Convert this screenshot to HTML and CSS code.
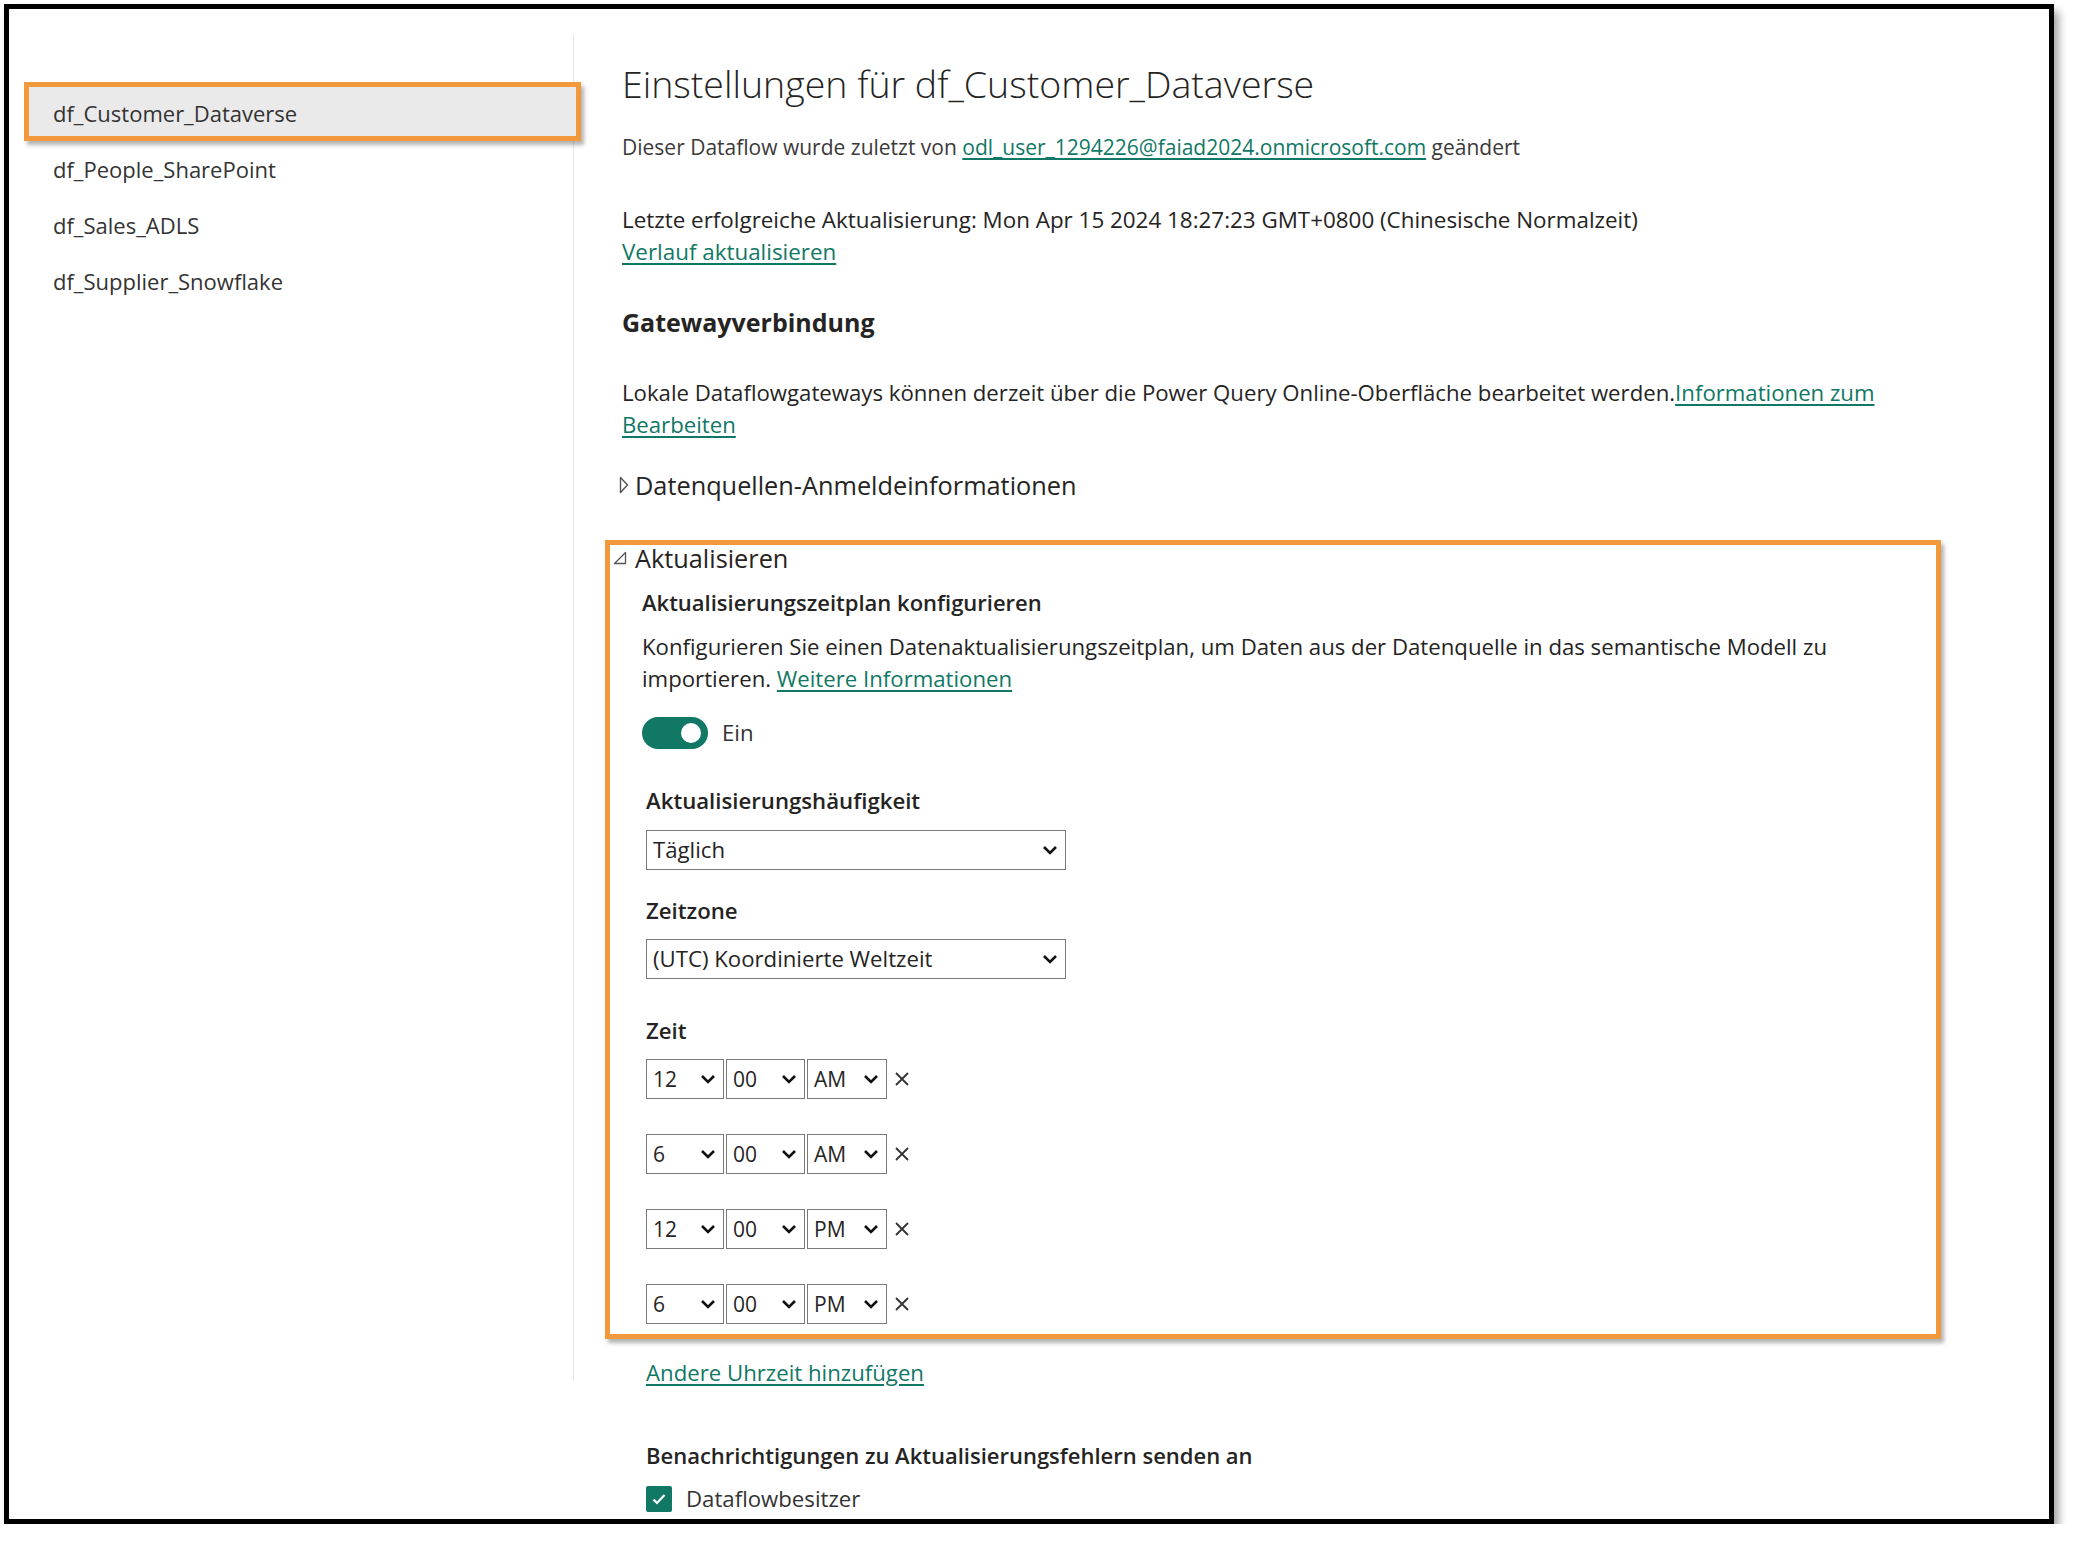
FILE: index.html
```html
<!DOCTYPE html>
<html lang="de">
<head>
<meta charset="utf-8">
<title>Einstellungen für df_Customer_Dataverse</title>
<link rel="stylesheet" href="styles.css">
</head>
<body>
<div class="frame">
  <nav class="sidebar">
    <ul class="df-list">
      <li class="df-item selected">df_Customer_Dataverse</li>
      <li class="df-item">df_People_SharePoint</li>
      <li class="df-item">df_Sales_ADLS</li>
      <li class="df-item">df_Supplier_Snowflake</li>
    </ul>
  </nav>
  <main class="main">
    <h1 class="title">Einstellungen für df_Customer_Dataverse</h1>
    <p class="modified">Dieser Dataflow wurde zuletzt von <a class="link">odl_user_1294226@faiad2024.onmicrosoft.com</a> geändert</p>
    <p class="last-refresh">Letzte erfolgreiche Aktualisierung: Mon Apr 15 2024 18:27:23 GMT+0800 (Chinesische Normalzeit)<br><a class="link">Verlauf aktualisieren</a></p>
    <h2 class="section-title">Gatewayverbindung</h2>
    <p class="gateway-text">Lokale Dataflowgateways können derzeit über die Power Query Online-Oberfläche bearbeitet werden.<a class="link">Informationen zum<br>Bearbeiten</a></p>
    <div class="expander collapsed">
      <svg class="tri-right" width="10" height="18" viewBox="0 0 10 18"><path d="M1.5 1.5 L8.5 9 L1.5 16.5 Z" fill="none" stroke="#555" stroke-width="1.4" stroke-linejoin="round"/></svg>
      <span>Datenquellen-Anmeldeinformationen</span>
    </div>
    <section class="highlight">
      <div class="expander open">
        <svg class="tri-down" width="14" height="14" viewBox="0 0 14 14"><path d="M12.5 1.5 L12.5 12.5 L1.5 12.5 Z" fill="none" stroke="#555" stroke-width="1.3" stroke-linejoin="round"/></svg>
        <span>Aktualisieren</span>
      </div>
      <div class="refresh-body">
        <h3 class="sub-title">Aktualisierungszeitplan konfigurieren</h3>
        <p class="desc">Konfigurieren Sie einen Datenaktualisierungszeitplan, um Daten aus der Datenquelle in das semantische Modell zu<br>importieren. <a class="link">Weitere Informationen</a></p>
        <div class="toggle-row">
          <span class="toggle"><span class="knob"></span></span>
          <span class="toggle-label">Ein</span>
        </div>
        <div class="field freq">
          <label class="field-label">Aktualisierungshäufigkeit</label>
          <div class="select wide"><span>Täglich</span><svg class="chev" width="16" height="10" viewBox="0 0 16 10"><path d="M2 2 L8 8 L14 2" fill="none" stroke="#111" stroke-width="2.6"/></svg></div>
        </div>
        <div class="field tz">
          <label class="field-label">Zeitzone</label>
          <div class="select wide"><span>(UTC) Koordinierte Weltzeit</span><svg class="chev" width="16" height="10" viewBox="0 0 16 10"><path d="M2 2 L8 8 L14 2" fill="none" stroke="#111" stroke-width="2.6"/></svg></div>
        </div>
        <div class="field time">
          <label class="field-label">Zeit</label>
          <div class="time-list">
            <div class="time-row">
              <div class="select t-hour"><span>12</span><svg class="chev" width="16" height="10" viewBox="0 0 16 10"><path d="M2 2 L8 8 L14 2" fill="none" stroke="#111" stroke-width="2.6"/></svg></div>
              <div class="select t-min"><span>00</span><svg class="chev" width="16" height="10" viewBox="0 0 16 10"><path d="M2 2 L8 8 L14 2" fill="none" stroke="#111" stroke-width="2.6"/></svg></div>
              <div class="select t-ap"><span>AM</span><svg class="chev" width="16" height="10" viewBox="0 0 16 10"><path d="M2 2 L8 8 L14 2" fill="none" stroke="#111" stroke-width="2.6"/></svg></div>
              <svg class="remove" width="16" height="16" viewBox="0 0 16 16"><path d="M2 2 L14 14 M14 2 L2 14" stroke="#333" stroke-width="1.8"/></svg>
            </div>
            <div class="time-row">
              <div class="select t-hour"><span>6</span><svg class="chev" width="16" height="10" viewBox="0 0 16 10"><path d="M2 2 L8 8 L14 2" fill="none" stroke="#111" stroke-width="2.6"/></svg></div>
              <div class="select t-min"><span>00</span><svg class="chev" width="16" height="10" viewBox="0 0 16 10"><path d="M2 2 L8 8 L14 2" fill="none" stroke="#111" stroke-width="2.6"/></svg></div>
              <div class="select t-ap"><span>AM</span><svg class="chev" width="16" height="10" viewBox="0 0 16 10"><path d="M2 2 L8 8 L14 2" fill="none" stroke="#111" stroke-width="2.6"/></svg></div>
              <svg class="remove" width="16" height="16" viewBox="0 0 16 16"><path d="M2 2 L14 14 M14 2 L2 14" stroke="#333" stroke-width="1.8"/></svg>
            </div>
            <div class="time-row">
              <div class="select t-hour"><span>12</span><svg class="chev" width="16" height="10" viewBox="0 0 16 10"><path d="M2 2 L8 8 L14 2" fill="none" stroke="#111" stroke-width="2.6"/></svg></div>
              <div class="select t-min"><span>00</span><svg class="chev" width="16" height="10" viewBox="0 0 16 10"><path d="M2 2 L8 8 L14 2" fill="none" stroke="#111" stroke-width="2.6"/></svg></div>
              <div class="select t-ap"><span>PM</span><svg class="chev" width="16" height="10" viewBox="0 0 16 10"><path d="M2 2 L8 8 L14 2" fill="none" stroke="#111" stroke-width="2.6"/></svg></div>
              <svg class="remove" width="16" height="16" viewBox="0 0 16 16"><path d="M2 2 L14 14 M14 2 L2 14" stroke="#333" stroke-width="1.8"/></svg>
            </div>
            <div class="time-row">
              <div class="select t-hour"><span>6</span><svg class="chev" width="16" height="10" viewBox="0 0 16 10"><path d="M2 2 L8 8 L14 2" fill="none" stroke="#111" stroke-width="2.6"/></svg></div>
              <div class="select t-min"><span>00</span><svg class="chev" width="16" height="10" viewBox="0 0 16 10"><path d="M2 2 L8 8 L14 2" fill="none" stroke="#111" stroke-width="2.6"/></svg></div>
              <div class="select t-ap"><span>PM</span><svg class="chev" width="16" height="10" viewBox="0 0 16 10"><path d="M2 2 L8 8 L14 2" fill="none" stroke="#111" stroke-width="2.6"/></svg></div>
              <svg class="remove" width="16" height="16" viewBox="0 0 16 16"><path d="M2 2 L14 14 M14 2 L2 14" stroke="#333" stroke-width="1.8"/></svg>
            </div>
          </div>
        </div>
      </div>
    </section>
    <p class="add-time"><a class="link">Andere Uhrzeit hinzufügen</a></p>
    <h3 class="sub-title notify">Benachrichtigungen zu Aktualisierungsfehlern senden an</h3>
    <div class="check-row">
      <span class="checkbox"><svg width="16" height="14" viewBox="0 0 16 14"><path d="M2.5 7.5 L6 11 L13.5 3" fill="none" stroke="#fff" stroke-width="2.2"/></svg></span>
      <span class="check-label">Dataflowbesitzer</span>
    </div>
  </main>
</div>
</body>
</html>
```

FILE: styles.css
```css
* { box-sizing: border-box; }
html, body { margin: 0; padding: 0; background: #fff; }
body {
  font-family: "Open Sans", "Noto Sans", sans-serif;
  color: #252423;
}
.frame {
  margin: 4px 0 0 4px;
  width: 2050px;
  height: 1520px;
  border: 5px solid #000;
  background: #fff;
  box-shadow: 5px 7px 8px rgba(0,0,0,0.35);
  display: flex;
  overflow: hidden;
}
/* Sidebar */
.sidebar {
  width: 565px;
  flex: none;
  margin-top: 26px;
  height: 1345px;
  border-right: 1px solid #e6e6e6;
}
.df-list {
  list-style: none;
  margin: 0;
  padding: 50px 0 0 0;
}
.df-item {
  height: 56px;
  line-height: 56px;
  padding-left: 44px;
  font-size: 22px;
  color: #333;
  position: relative;
  z-index: 0;
}
.df-item.selected::before {
  content: "";
  position: absolute;
  left: 15px;
  right: -8px;
  top: -3px;
  bottom: 0;
  background: #eaeaea;
  border: 5px solid #f2993c;
  box-shadow: 3px 4px 4px rgba(0,0,0,0.3);
  z-index: -1;
}
/* Main */
.main {
  flex: 1;
  padding: 51px 0 0 48px;
  line-height: 32px;
  font-size: 22.2px;
  white-space: nowrap;
}
.main p, .main h1, .main h2, .main h3 { margin: 0; }
.link { color: #117865; text-decoration: underline; text-underline-offset: 3px; }
.title {
  font-size: 37.5px;
  font-weight: 300;
  line-height: 48px;
  color: #252423;
}
.main .modified { margin-top: 23px; color: #3b3a39; font-size: 21px; }
.main .last-refresh { margin-top: 41px; font-size: 22.4px; }
.main .section-title { margin-top: 38px; font-size: 25px; font-weight: 700; }
.main .gateway-text { margin-top: 39px; }
.expander {
  display: flex;
  align-items: center;
  font-size: 25.3px;
  color: #252423;
}
.expander.collapsed { margin-top: 28px; margin-left: -3px; height: 32px; gap: 6px; }
.expander.open { height: 26px; gap: 8px; margin-left: 3px; }
.highlight {
  margin-top: 39px;
  margin-left: -17px;
  width: 1336px;
  border: 5px solid #f2993c;
  box-shadow: 3px 4px 4px rgba(0,0,0,0.3);
  padding: 0 0 10px 0;
}
.refresh-body { padding-left: 32px; }
.sub-title { font-size: 22px; font-weight: 600; line-height: 32px; }
.main .refresh-body .sub-title { margin-top: 15px; }
.main .desc { margin-top: 13px; }
.toggle-row { margin-top: 22px; height: 32px; display: flex; align-items: center; gap: 14px; }
.toggle {
  width: 66px; height: 32px; border-radius: 16px;
  background: #117865;
  display: flex; align-items: center; justify-content: flex-end;
  padding-right: 7px;
}
.knob { width: 20px; height: 20px; border-radius: 50%; background: #fff; }
.toggle-label { color: #333; }
.field { margin-left: 4px; }
.field-label { display: block; font-weight: 600; line-height: 32px; }
.field.freq { margin-top: 36px; }
.field.tz { margin-top: 25px; }
.field.time { margin-top: 36px; }
.select {
  display: flex; align-items: center; justify-content: space-between;
  height: 40px;
  border: 1.5px solid #7a7a7a;
  background: #fff;
  padding: 0 7px 0 6px;
  color: #252423;
}
.select.wide { width: 420px; margin-top: 13px; }
.field.tz .select.wide { margin-top: 12px; }
.time-list { margin-top: 12px; display: flex; flex-direction: column; gap: 35px; }
.time-row { display: flex; align-items: center; gap: 2px; }
.t-hour { width: 78px; }
.t-min { width: 79px; }
.t-ap { width: 80px; }
.time-row .select { font-size: 21px; }
.remove { margin-left: 5px; }
.main .add-time { margin-top: 18px; margin-left: 24px; }
.main .sub-title.notify { margin-top: 50px; margin-left: 24px; }
.check-row { margin-top: 12px; margin-left: 24px; display: flex; align-items: center; gap: 14px; height: 32px; }
.checkbox {
  width: 26px; height: 26px; border-radius: 2px; background: #117865;
  display: flex; align-items: center; justify-content: center;
}
.check-label { color: #333; }
```
